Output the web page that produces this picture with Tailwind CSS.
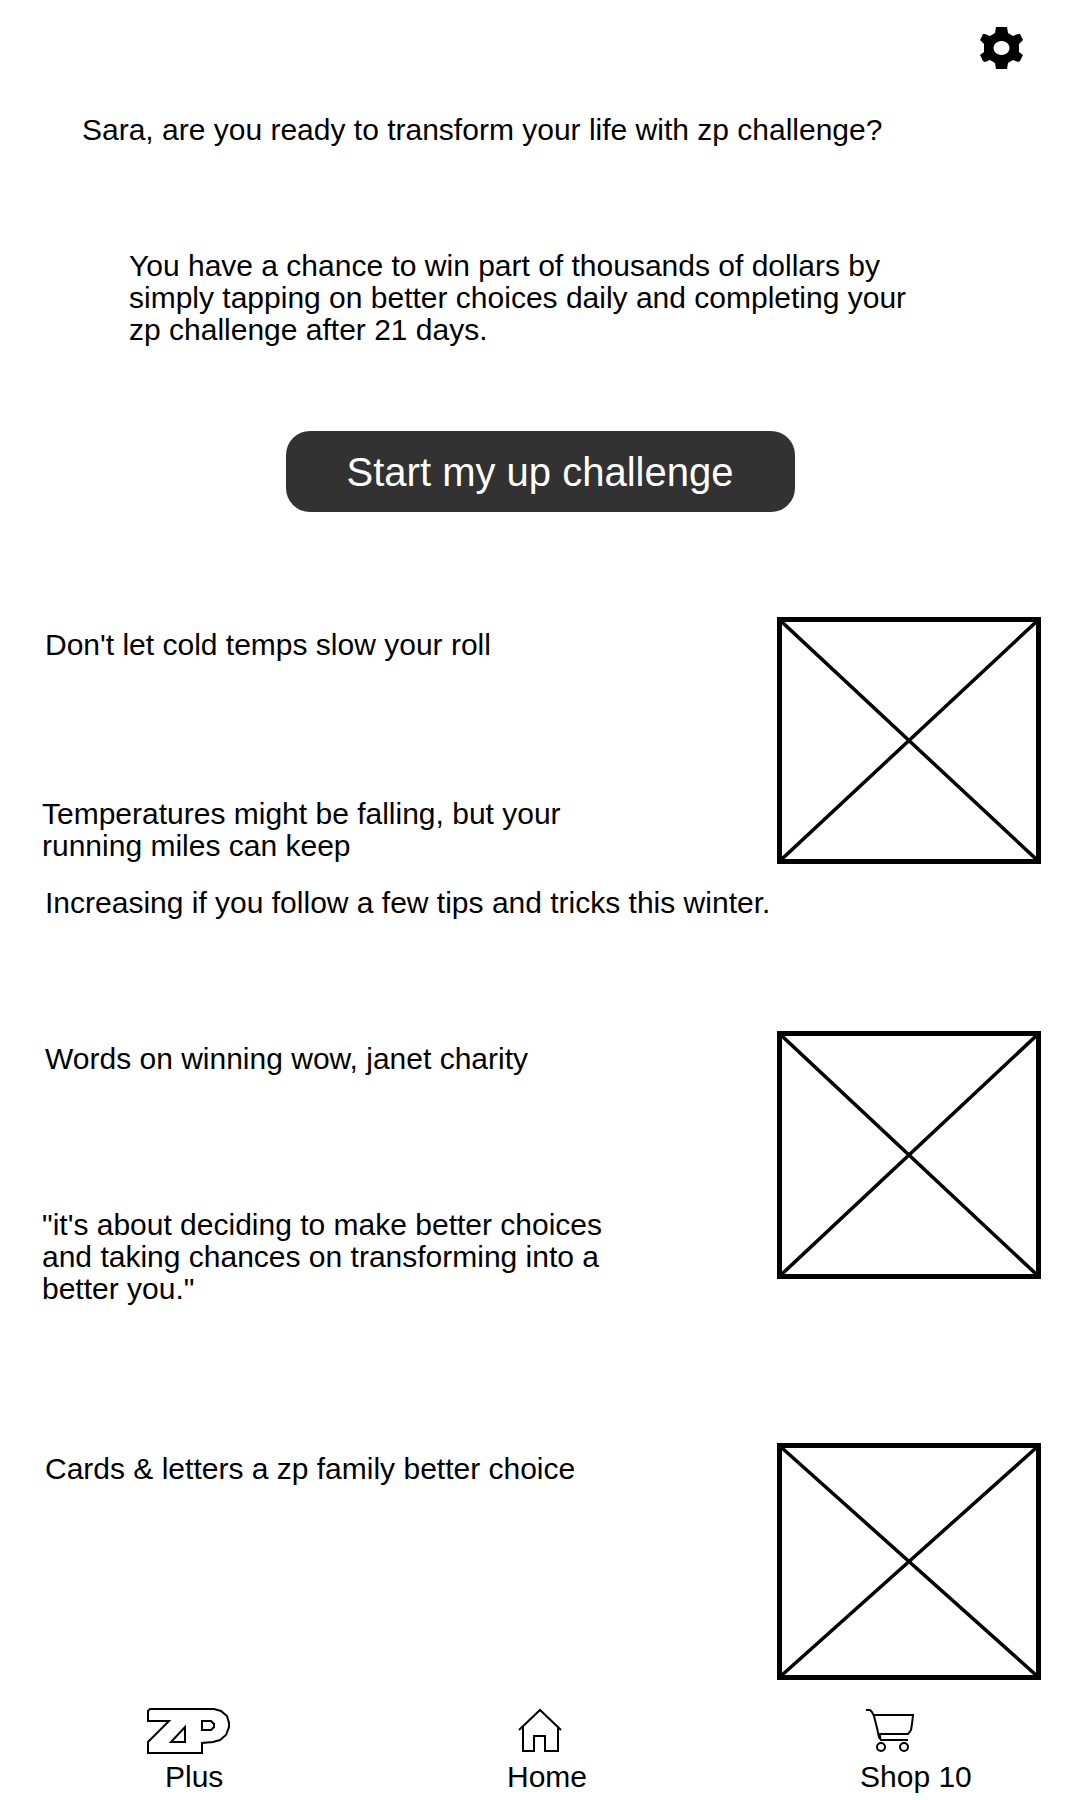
<!DOCTYPE html>
<html lang="en">
<head>
<meta charset="utf-8">
<meta name="viewport" content="width=device-width, initial-scale=1">
<title>ZP Challenge</title>
<script src="https://cdn.jsdelivr.net/npm/@tailwindcss/browser@4"></script>
</head>
<body class="bg-white text-black font-['Liberation_Sans',Arial,sans-serif] text-[30px] leading-8">
<header class="flex justify-end pt-[27px] pr-[57px]">
  <button type="button" aria-label="Settings" class="block">
    <svg class="block" width="43" height="42" viewBox="0 0 43 42"><path fill-rule="evenodd" d="M16 0h11l1 6 5 3 5-2h2l3 6-4 4v8l4 3-3 6-2 1-5-2-5 3-1 6H16l-1-6-5-3-5 2-2-1-3-6 4-3v-8l-4-4 3-6h2l5 2 5-3zM21.500 14a8 7 0 1 0 .01 0z"/></svg>
  </button>
</header>
<main>
  <h1 class="mt-[45px] pl-[82px]">Sara, are you ready to transform your life with zp challenge?</h1>
  <p class="mt-[104px] ml-[129px] max-w-[800px]">You have a chance to win part of thousands of dollars by simply tapping on better choices daily and completing your zp challenge after 21 days.</p>
  <div class="mt-[85px] flex justify-center">
    <button type="button" class="h-[81px] w-[509px] rounded-3xl bg-[#323232] text-[40px] text-white">Start my up challenge</button>
  </div>

  <section class="mt-[105px] pl-[42px] pr-[39px]">
    <article>
      <div class="flex justify-between">
        <div class="max-w-[600px] pt-3">
          <h2 class="pl-[3px]">Don't let cold temps slow your roll</h2>
          <p class="mt-[137px]">Temperatures might be falling, but your running miles can keep</p>
        </div>
        <svg class="h-[247px] w-[264px] shrink-0 border-[5px] border-black" viewBox="0 0 254 237" preserveAspectRatio="none" stroke="#000" stroke-width="3.500"><path d="M0 0L254 237M254 0L0 237"/></svg>
      </div>
      <p class="mt-[23px] pl-[3px]">Increasing if you follow a few tips and tricks this winter.</p>
    </article>

    <article class="mt-28 flex items-start justify-between">
      <div class="max-w-[600px] pt-3">
        <h2 class="pl-[3px]">Words on winning wow, janet charity</h2>
        <p class="mt-[134px]">"it's about deciding to make better choices and taking chances on transforming into a better you."</p>
      </div>
      <svg class="h-[248px] w-[264px] shrink-0 border-[5px] border-black" viewBox="0 0 254 238" preserveAspectRatio="none" stroke="#000" stroke-width="3.500"><path d="M0 0L254 238M254 0L0 238"/></svg>
    </article>

    <article class="mt-[138px] flex items-start justify-between">
      <div class="max-w-[600px] pt-2.5">
        <h2 class="pl-[3px]">Cards &amp; letters a zp family better choice</h2>
      </div>
      <svg class="h-[237px] w-[264px] shrink-0 border-[5px] border-black" viewBox="0 0 254 227" preserveAspectRatio="none" stroke="#000" stroke-width="3.500"><path d="M0 0L254 227M254 0L0 227"/></svg>
    </article>
  </section>
</main>
<nav class="mt-7 grid grid-cols-3 pb-1.5">
  <a href="#plus" class="flex flex-col items-start gap-[7px] pl-[147px]">
    <svg class="block" width="84" height="46" viewBox="0 0 84 46" fill="none" stroke="#000" stroke-width="2"><path d="M3 1h64l7 2 6 5 2 7v4l-3 8-6 5-7 2-11 1v10H1V34l21-21H1V3zM38 19v15H24zM55 13v9h9l3-3v-3l-3-3z"/></svg>
    <span class="pl-[18px]">Plus</span>
  </a>
  <a href="#home" class="flex flex-col items-start gap-[7px] pl-[147px]">
    <svg class="ml-[11px] block" width="44" height="46" viewBox="0 0 44 46" fill="none" stroke="#000" stroke-width="2"><path d="M1 22L22 2l21 20M5 18v25h11V28h11v15h13V18"/></svg>
    <span>Home</span>
  </a>
  <a href="#shop" class="flex flex-col items-start gap-[7px] pl-[140px]">
    <svg class="ml-1.5 block" width="50" height="46" viewBox="0 0 50 46" fill="none" stroke="#000" stroke-width="2"><path d="M0 2h4l2 2 2 4 3 12 2 9 2 3H42M8 7h39l-1 9-1 6-3 4H13"/><path d="M13 26l1 4" stroke-width="3"/><circle cx="15" cy="39" r="4"/><circle cx="38" cy="39" r="4"/></svg>
    <span>Shop 10</span>
  </a>
</nav>
</body>
</html>
